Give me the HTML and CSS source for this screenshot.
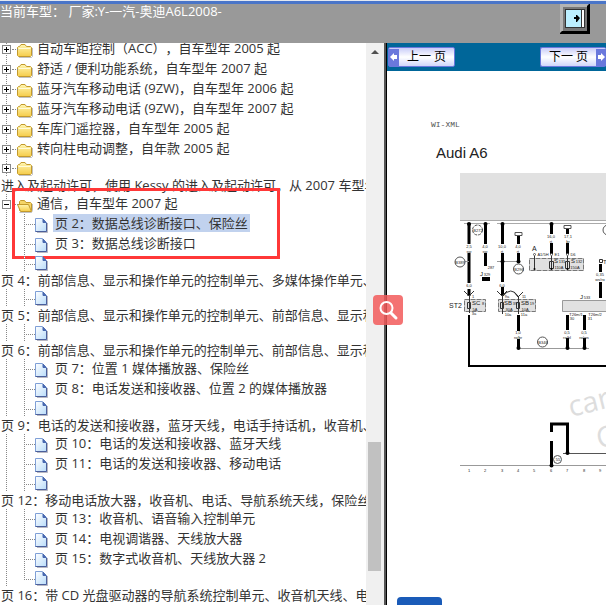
FILE: index.html
```html
<!DOCTYPE html>
<html lang="zh-CN">
<head>
<meta charset="utf-8">
<title>Audi A6L 2008</title>
<link rel="stylesheet" href="styles.css">
</head>
<body>
<svg class="defs" aria-hidden="true">
  <defs>
    <linearGradient id="gold" x1="0" y1="0" x2="0" y2="1"><stop offset="0" stop-color="#fff6b0"/><stop offset="1" stop-color="#f5cc4a"/></linearGradient>
    <linearGradient id="paper" x1="0" y1="0" x2="1" y2="1"><stop offset="0" stop-color="#ffffff"/><stop offset="1" stop-color="#b9dcfa"/></linearGradient>
    <symbol id="folder" viewBox="0 0 16 15">
      <path d="M2 14.5h12.5l1-1V5" fill="none" stroke="#999" stroke-opacity=".6"/>
      <path d="M.5 12.500V4.500l1-1h1l1.500-2h4l1.500 2h4l1 1v8l-1 1h-12z" fill="url(#gold)" stroke="#c39a2c"/>
      <path d="M1.500 5.500h12" stroke="#fffbd8"/>
    </symbol>
    <symbol id="folder-open" viewBox="0 0 16 15">
      <path d="M2.500 14.500h12l1-2V6" fill="none" stroke="#999" stroke-opacity=".6"/>
      <path d="M2.500 12.500V3.500l1-1h4l1.500 2h4.500l1 1v7z" fill="#f4d568" stroke="#c39a2c"/>
      <path d="M.5 6.500h11l3 7h-11z" fill="url(#gold)" stroke="#c39a2c"/>
    </symbol>
    <symbol id="page" viewBox="0 0 13 15">
      <path d="M2 14.500h10.500V5" fill="none" stroke="#889" stroke-opacity=".6"/>
      <path d="M.5.5h7l4 4v9H.5z" fill="url(#paper)" stroke="#7f9fd6"/>
      <path d="M8 1l3 3.500H8z" fill="#4868b0" stroke="#4868b0"/>
      <path d="M11.500 5v8.500H.5" fill="none" stroke="#4a5f9c"/>
    </symbol>
  </defs>
</svg>

<header class="topbar">
  <p class="model">当前车型： 厂家<b>:Y-一汽-奥迪A6L2008-</b></p>
  <button class="exit" aria-label="退出">
    <svg width="30" height="30" viewBox="0 0 30 30">
      <path d="M0 0h30v30H0z" fill="#000"/>
      <path d="M0 0h29l-2 2v25H2l-2 2z" fill="#b4b4b4"/>
      <path d="M3 3h24v24H3z" fill="#777"/>
      <path d="M5 5h20v19H5z" fill="#333"/>
      <path d="M6 6h15v17H6z" fill="#bcefff"/>
      <path d="M22 6h2v17h-2z" fill="#fff"/>
      <path d="M14 13h2v-2h1l3 3-3 4h-1v-3h-2z" fill="#000"/>
    </svg>
  </button>
</header>

<main class="frames">
  <nav class="side" aria-label="目录">
    <ul class="tree">
      <li class="row"><button class="toggle" aria-label="展开"></button><svg class="folder"><use href="#folder"/></svg><span>自动车距控制（ACC），自车型年 2005 起</span></li>
      <li class="row"><button class="toggle" aria-label="展开"></button><svg class="folder"><use href="#folder"/></svg><span>舒适 / 便利功能系统，自车型年 2007 起</span></li>
      <li class="row"><button class="toggle" aria-label="展开"></button><svg class="folder"><use href="#folder"/></svg><span>蓝牙汽车移动电话 (9ZW)，自车型年 2006 起</span></li>
      <li class="row"><button class="toggle" aria-label="展开"></button><svg class="folder"><use href="#folder"/></svg><span>蓝牙汽车移动电话 (9ZW)，自车型年 2007 起</span></li>
      <li class="row"><button class="toggle" aria-label="展开"></button><svg class="folder"><use href="#folder"/></svg><span>车库门遥控器，自车型年 2005 起</span></li>
      <li class="row"><button class="toggle" aria-label="展开"></button><svg class="folder"><use href="#folder"/></svg><span>转向柱电动调整，自年款 2005 起</span></li>
      <li><div class="row short"><button class="toggle" aria-label="展开"></button><svg class="folder"><use href="#folder"/></svg></div><span class="wrapped">进入及起动许可，使用 Kessy 的进入及起动许可，从 2007 车型年起</span></li>
      <li class="marked">
        <div class="row"><button class="toggle open" aria-label="收起"></button><svg class="folder"><use href="#folder-open"/></svg><span>通信，自车型年 2007 起</span></div>
        <div class="row child"><svg class="page"><use href="#page"/></svg><a class="current" href="#p2">页 2：数据总线诊断接口、保险丝</a></div>
        <div class="row child"><svg class="page"><use href="#page"/></svg><a href="#p3">页 3：数据总线诊断接口</a></div>
      </li>
      <li><div class="row child short"><svg class="page"><use href="#page"/></svg></div><a class="wrapped" href="#p4">页 4：前部信息、显示和操作单元的控制单元、多媒体操作单元、</a></li>
      <li><div class="row child short"><svg class="page"><use href="#page"/></svg></div><a class="wrapped" href="#p5">页 5：前部信息、显示和操作单元的控制单元、前部信息、显示和</a></li>
      <li><div class="row child short"><svg class="page"><use href="#page"/></svg></div><a class="wrapped" href="#p6">页 6：前部信息、显示和操作单元的控制单元、前部信息、显示和</a></li>
      <li class="row child"><svg class="page"><use href="#page"/></svg><a href="#p7">页 7：位置 1 媒体播放器、保险丝</a></li>
      <li class="row child"><svg class="page"><use href="#page"/></svg><a href="#p8">页 8：电话发送和接收器、位置 2 的媒体播放器</a></li>
      <li><div class="row child short"><svg class="page"><use href="#page"/></svg></div><a class="wrapped" href="#p9">页 9：电话的发送和接收器，蓝牙天线，电话手持话机，收音机、</a></li>
      <li class="row child"><svg class="page"><use href="#page"/></svg><a href="#p10">页 10：电话的发送和接收器、蓝牙天线</a></li>
      <li class="row child"><svg class="page"><use href="#page"/></svg><a href="#p11">页 11：电话的发送和接收器、移动电话</a></li>
      <li><div class="row child short"><svg class="page"><use href="#page"/></svg></div><a class="wrapped" href="#p12">页 12：移动电话放大器，收音机、电话、导航系统天线，保险丝</a></li>
      <li class="row child"><svg class="page"><use href="#page"/></svg><a href="#p13">页 13：收音机、语音输入控制单元</a></li>
      <li class="row child"><svg class="page"><use href="#page"/></svg><a href="#p14">页 14：电视调谐器、天线放大器</a></li>
      <li class="row child"><svg class="page"><use href="#page"/></svg><a href="#p15">页 15：数字式收音机、天线放大器 2</a></li>
      <li><div class="row child short last"><svg class="page"><use href="#page"/></svg></div><a class="wrapped" href="#p16">页 16：带 CD 光盘驱动器的导航系统控制单元、收音机天线、电</a></li>
    </ul>
  </nav>
  <div class="scrollbar" aria-hidden="true"><i class="up"></i><i class="thumb"></i></div>

  <section class="viewer">
    <div class="pager">
      <button class="prev"><svg width="10" height="17" viewBox="0 0 10 17"><path d="M0 0h10v17H0z" fill="#6a78dc"/><path d="M1 8l4-4v2h3v4H5v2z" fill="#fff"/></svg><span>上一 页</span></button>
      <button class="next"><span>下一 页</span><svg width="10" height="17" viewBox="0 0 10 17"><path d="M0 0h10v17H0z" fill="#6a78dc"/><path d="M9 8L5 4v2H2v4h3v2z" fill="#fff"/></svg></button>
    </div>
    <svg class="diagram" width="219" height="534" viewBox="387 71 219 534" role="img" aria-label="Audi A6">
      <text x="431" y="127" class="mono">WI-XML</text>
      <text x="436" y="158" class="title">Audi A6</text>

      <path d="M460 173h146v47H460z" fill="#e1e1e1"/>
      <path d="M460 220.500h146" stroke="#aaa"/>
      <path d="M464 223.500h26M497 223.500h109" stroke="#aaa"/>

      <g fill="#e1e1e1" stroke="#777" stroke-dasharray="5 1">
        <path d="M529.500 258.500h54v12h-54z"/>
        <path d="M464.500 299.500h21v12h-21z"/>
        <path d="M498.500 299.500h37v12h-37z"/>
      </g>
      <path d="M562.500 300.500h44v11h-44z" fill="#e1e1e1" stroke="#999"/>

      <g fill="none" stroke="#000" stroke-width="3">
        <path d="M469 223v21M469 253v30M469 289v7M485.500 223v21M485.500 253v13M502.500 223v21M502.500 253v29M502.500 287v9M518.500 235v9M518.500 253v9M551.500 223v11M551.500 243v11M567.500 228v6M567.500 243v11M600.500 264v8M600.500 282v16"/>
        <path d="M518.500 315v16M518.500 339v9M567.500 315v15M567.500 338v10M584.500 315v15M584.500 338v10"/>
        <path d="M551.500 466v-25M551.500 432v-8h16v29"/>
      </g>
      <path d="M469 315v51h137" fill="none" stroke="#000" stroke-width="2"/>
      <path d="M482 277h8v4h-8z"/>
      <g fill="none" stroke="#333">
        <path d="M464 291l5 5 5-5M497 291l5 5 5-5M514 292l4 5 5-5M503 296q8-10 15 0"/>
        <path d="M534.500 256v13M551.500 256v13M567.500 256v13M469.500 296v17M502.500 296v18M518.500 296v18"/>
        <path d="M549.500 261.500h4v7h-4zM565.500 261.500h4v7h-4zM467.500 302.500h3v6h-3zM500.500 302.500h3v6h-3zM516.500 302.500h3v6h-3z"/>
        <path d="M599.500 259.500h3v3h-3z"/>
      </g>
      <path d="M462 261.500h7M497 261.500h22M518 348.500h71M460 465.500h146" stroke="#999"/>
      <path d="M563 453.500h43" stroke="#555"/>
      <g fill="#fff" stroke="#555">
        <circle cx="477.500" cy="230" r="5" stroke-dasharray="3 1"/>
        <circle cx="460" cy="262" r="5"/>
        <circle cx="518.500" cy="269" r="5"/>
        <circle cx="542.500" cy="342" r="5"/>
        <circle cx="557.500" cy="459.500" r="4"/>
        <circle cx="608" cy="230" r="5"/>
        <circle cx="534.500" cy="254.500" r="1"/><circle cx="551.500" cy="254.500" r="1"/><circle cx="567.500" cy="254.500" r="1"/>
        <path d="M515 232.500h7v3h-7zM564 225.500h7v3h-7z"/>
      </g>
      <g>
        <circle cx="469" cy="224" r="2"/><circle cx="485.500" cy="224" r="2"/><circle cx="502.500" cy="224" r="2"/><circle cx="551.500" cy="224" r="2"/>
        <circle cx="502.500" cy="261.500" r="2"/><circle cx="518.500" cy="261.500" r="2"/><circle cx="518.500" cy="348" r="2"/><circle cx="567.500" cy="348" r="2"/><circle cx="584.500" cy="348" r="2"/><circle cx="551.500" cy="465.500" r="2"/><circle cx="567.500" cy="453" r="2"/>
        <circle cx="534.500" cy="269" r="1"/><circle cx="551.500" cy="269" r="1"/><circle cx="567.500" cy="269" r="1"/>
      </g>

      <g class="tiny">
        <text x="469" y="248">2,5</text><text x="469" y="253">sw</text>
        <text x="485" y="248">4,0</text><text x="485" y="253">sw</text>
        <text x="502" y="248">10,0</text><text x="502" y="253">rt</text>
        <text x="518" y="248">4,0</text><text x="518" y="253">rt</text>
        <text x="551" y="238">16,0</text><text x="551" y="243">rt</text>
        <text x="568" y="238">17,1</text><text x="568" y="243">br</text>
        <text x="469" y="287">6,0</text><text x="502" y="287">6,0</text>
        <text x="491" y="269">287</text>
        <text x="543" y="256">A1/5H</text><text x="557" y="256">E1</text><text x="573" y="256">D6</text>
        <text x="600" y="276">0,35</text><text x="600" y="281">ws/ro</text>
        <text x="518" y="334">1,0</text><text x="518" y="339">ro/br</text>
        <text x="567" y="334">0,5</text><text x="567" y="339">ro/bl</text>
        <text x="584" y="334">0,5</text><text x="584" y="339">ro/ws</text>
        <text x="473" y="298">1</text><text x="507" y="298">9a</text><text x="524" y="298">11</text>
        <text x="474" y="315">3a</text><text x="508" y="316">10a</text><text x="524" y="316">11a</text>
        <text x="576" y="316">T26m/1</text><text x="572" y="320">30</text><text x="595" y="316">T26m/2</text><text x="590" y="320">31</text>
        <text x="478" y="232">B272</text><text x="460" y="264">B389</text><text x="519" y="271">B296</text><text x="543" y="344">B346</text><text x="558" y="461">55</text>
        <text x="475" y="311">5A</text><text x="509" y="311">30A</text><text x="525" y="311">10A</text>
        <text x="559" y="269">110A</text><text x="575" y="269">150A</text>
        <text x="469" y="472">1</text><text x="485" y="472">2</text><text x="502" y="472">3</text><text x="518" y="472">4</text><text x="534" y="472">5</text><text x="551" y="472">6</text><text x="567" y="472">7</text><text x="584" y="472">8</text><text x="600" y="472">9</text>
        <text x="483" y="305">8</text><text x="515" y="305">39</text><text x="532" y="305">19</text><text x="562" y="263">131</text><text x="579" y="263">132</text><text x="487" y="276">329</text><text x="587" y="299">533</text>
      </g>
      <g class="part">
        <text x="472" y="305">SC</text><text x="504" y="305">SB</text><text x="521" y="305">SB</text>
        <text x="554" y="263">S</text><text x="571" y="263">S</text><text x="480" y="276">J</text><text x="580" y="299">J</text><text x="603" y="264">T</text>
      </g>
      <g class="name"><text x="449" y="308">ST2</text><text x="532" y="251">A</text></g>
      <g class="watermark">
        <text transform="translate(571 417) rotate(-14)">car</text>
        <text transform="translate(599 449) rotate(-14)">C</text>
      </g>
    </svg>
    <button class="tab" aria-label="工具"></button>
  </section>
</main>
<button class="search" aria-label="搜索"><svg width="30" height="30" viewBox="0 0 30 30" fill="none" stroke="#fff" stroke-width="2"><circle cx="13.500" cy="13" r="6"/><path d="M18 18l5 5" stroke-width="3" stroke-linecap="round"/></svg></button>
</body>
</html>
```
FILE: styles.css
```css
*, *::before, *::after { box-sizing: border-box; }

body {
  margin: 0;
  height: 100vh;
  display: flex;
  flex-direction: column;
  overflow: hidden;
  background: #fff;
  color: #333;
  font: 13px/20px "Open Sans", "Noto Sans CJK SC", sans-serif;
  text-spacing-trim: space-all;
}

button {
  padding: 0;
  border: 0;
  background: none;
  font: inherit;
  color: inherit;
}

svg { display: block; flex: none; }
.defs { position: absolute; width: 0; height: 0; }

/* Top bar */
.topbar {
  display: flex;
  justify-content: space-between;
  align-items: flex-start;
  flex: none;
  min-height: 43px;
  padding: 4px 16px 0 0;
  background: linear-gradient(#e4e8f0 0 1px, #4a75c8 1px 4px, #999 4px);
}
.model { margin: 0; color: #fff; line-height: 14px; }
.model b { font-weight: 400; }

/* Frames */
.frames { display: flex; flex: 1; min-height: 0; }
.side { flex: 0 0 366px; overflow: hidden; }

.tree {
  margin: -4px 0 0;
  padding: 0;
  list-style: none;
  white-space: nowrap;
}
.tree a { color: inherit; text-decoration: none; }

.row {
  position: relative;
  display: flex;
  align-items: center;
  height: 20px;
  padding-left: 2px;
  line-height: 18px;
  background: repeating-linear-gradient(#888 0 1px, #fff 1px 2px) 6px 0 / 1px 100% no-repeat;
}
.row.short { height: 18px; }
.row span { padding-bottom: 2px; }

.toggle {
  position: relative;
  flex: none;
  width: 9px;
  height: 9px;
  margin-right: 6px;
  border: 1px solid #888;
  background:
    linear-gradient(#000, #000) center / 5px 1px no-repeat,
    linear-gradient(#000, #000) center / 1px 5px no-repeat,
    #fff;
}
.toggle.open { background: linear-gradient(#000, #000) center / 5px 1px no-repeat, #fff; }
.toggle::after {
  content: "";
  position: absolute;
  top: 3px;
  left: 9px;
  width: 6px;
  border-top: 1px dotted #888;
}

.folder { width: 16px; height: 15px; margin: 2px 4px 0 0; }
.page { width: 13px; height: 15px; margin: 2px 5px 0 0; }
.short .folder, .short .page { margin-top: 0; }

.child {
  padding-left: 35px;
  background:
    repeating-linear-gradient(#888 0 1px, #fff 1px 2px) 6px 0 / 1px 100% no-repeat,
    repeating-linear-gradient(#888 0 1px, #fff 1px 2px) 24px 0 / 1px 100% no-repeat,
    repeating-linear-gradient(90deg, #888 0 1px, #fff 1px 2px) 24px 10px / 11px 1px no-repeat;
}
.child.last { background-size: 1px 100%, 1px 10px, 11px 1px; }
.child a { padding: 0 2px; margin-bottom: 2px; }
.child a.current { background: #c1d2ee; }

.wrapped {
  display: block;
  height: 17px;
  padding-left: 1px;
  line-height: 17px;
}

.marked { position: relative; }
.marked::after {
  content: "";
  position: absolute;
  top: -6px;
  left: 12px;
  width: 268px;
  height: 71px;
  border: 3px solid #ff3838;
  pointer-events: none;
}

/* Scroll bar and frame divider */
.scrollbar {
  position: relative;
  flex: 0 0 21px;
  background: #f0f0f0;
  border-right: 1px solid #000;
  box-shadow: inset -2px 0 #555;
}
.up {
  position: absolute;
  top: 7px;
  left: 5px;
  border: 4px solid transparent;
  border-top: 0;
  border-bottom-color: #505050;
}
.thumb {
  position: absolute;
  top: 71%;
  bottom: 6%;
  left: 2px;
  width: 13px;
  background: #c1c1c1;
}

/* Viewer */
.viewer {
  position: relative;
  flex: 1;
  min-width: 0;
  overflow: hidden;
}
.pager {
  display: flex;
  justify-content: space-between;
  align-items: center;
  height: 28px;
  padding-left: 1px;
  background: #069;
}
.prev, .next {
  display: flex;
  align-items: center;
  height: 20px;
  border: 1px solid #6a78dc;
  border-radius: 2px;
  background: linear-gradient(#c8ccf8, #fff 50%, #d0d6fa);
  color: #000;
  font-size: 12px;
  line-height: 18px;
}
.prev span, .next span { padding: 0 8px; }
.next { border-right: 0; }

.diagram text { font-family: "Liberation Sans", sans-serif; fill: #222; }
.diagram .mono { font: 8px "Liberation Mono", monospace; fill: #555; }
.diagram .title { font-size: 15px; }
.diagram .tiny text { font-size: 4px; text-anchor: middle; }
.diagram .part text { font-size: 6px; }
.diagram .name text { font-size: 7px; }
.diagram .watermark text { font: 29px "Open Sans", sans-serif; fill: #ddd; }

.tab {
  position: absolute;
  bottom: 0;
  left: 10px;
  width: 45px;
  height: 8px;
  border-radius: 4px 4px 0 0;
  background: #1a5bb8;
}

.search {
  position: absolute;
  top: 295px;
  left: 373px;
  border-radius: 4px;
  background: rgba(242, 90, 90, 0.85);
}
```
